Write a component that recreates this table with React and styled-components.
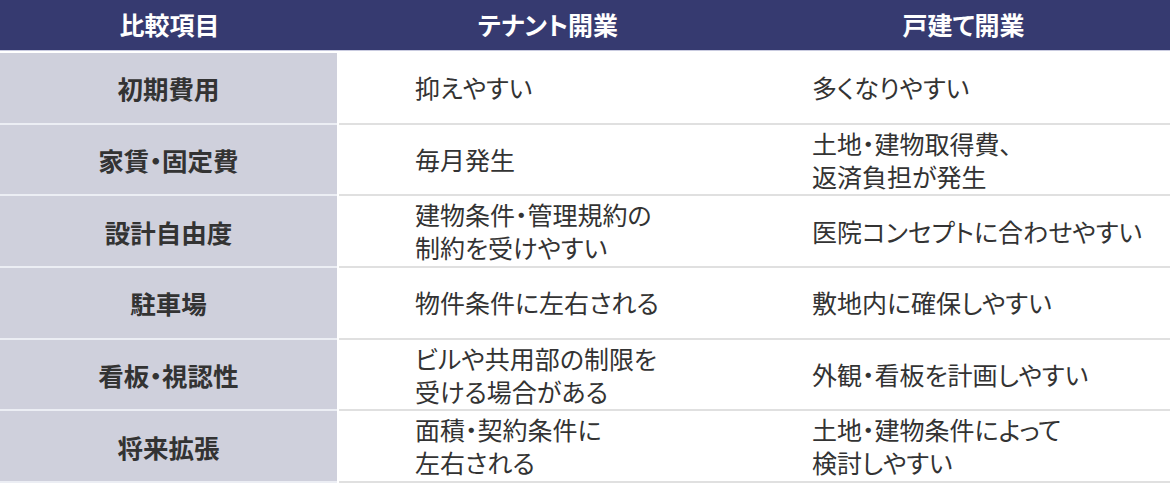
import { Fragment } from "react";
import styled, { createGlobalStyle } from "styled-components";

const Global = createGlobalStyle`
  html, body { margin: 0; padding: 0; background: #ffffff; }
  body { font-family: "Noto Sans CJK JP", "Noto Sans", sans-serif; }
`;

const Table = styled.div`
  width: 1170px;
  display: grid;
  grid-template-columns: 339px 418px 1fr;
  font-feature-settings: "palt";
`;

const Head = styled.div`
  height: 51px;
  background: #363a70;
  border-bottom: 1px solid #c9cbe0;
  color: #ffffff;
  font-weight: 700;
  font-size: 25px;
  display: flex;
  align-items: center;
  justify-content: center;
  margin-bottom: 2px;
  padding-bottom: 2px;
  box-sizing: border-box;
`;

const Cell = styled.div`
  height: 71.7px;
  box-sizing: border-box;
  border-bottom: 2px solid ${(p) => (p.$label ? "#eceef4" : "#e0e0e0")};
  background: ${(p) => (p.$label ? "#cfd0dc" : "#ffffff")};
  margin-right: ${(p) => (p.$label ? "2px" : "0")};
  display: flex;
  align-items: center;
  justify-content: ${(p) => (p.$label ? "center" : "flex-start")};
  padding-left: ${(p) => p.$pad || 0}px;
  color: #333333;
  font-size: ${(p) => (p.$label ? 25.5 : 25)}px;
  font-weight: ${(p) => (p.$label ? 700 : 400)};
  line-height: 33px;
`;

const rows = [
  ["初期費用", ["抑えやすい"], ["多くなりやすい"]],
  ["家賃・固定費", ["毎月発生"], ["土地・建物取得費、", "返済負担が発生"]],
  ["設計自由度", ["建物条件・管理規約の", "制約を受けやすい"], ["医院コンセプトに合わせやすい"]],
  ["駐車場", ["物件条件に左右される"], ["敷地内に確保しやすい"]],
  ["看板・視認性", ["ビルや共用部の制限を", "受ける場合がある"], ["外観・看板を計画しやすい"]],
  ["将来拡張", ["面積・契約条件に", "左右される"], ["土地・建物条件によって", "検討しやすい"]],
];

const Lines = ({ lines }) => (
  <div>
    {lines.map((l) => (
      <div key={l}>{l}</div>
    ))}
  </div>
);

export default function App() {
  return (
    <>
      <Global />
      <Table>
        <Head>比較項目</Head>
        <Head>テナント開業</Head>
        <Head>戸建て開業</Head>
        {rows.map(([label, a, b]) => (
          <Fragment key={label}>
            <Cell $label>{label}</Cell>
            <Cell $pad={76}>
              <Lines lines={a} />
            </Cell>
            <Cell $pad={55}>
              <Lines lines={b} />
            </Cell>
          </Fragment>
        ))}
      </Table>
    </>
  );
}
